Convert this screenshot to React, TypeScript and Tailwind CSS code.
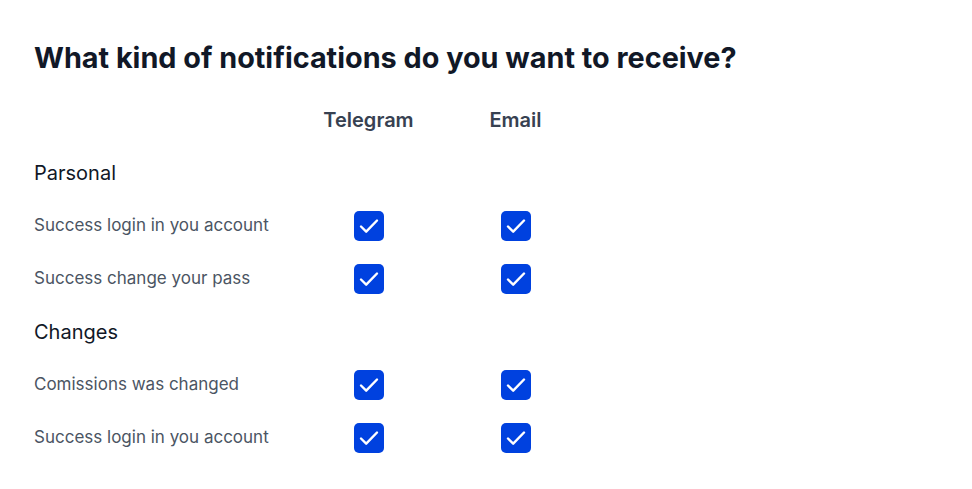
import React, { useState } from "react";

type Row = { id: string; label: string };

const sections: { title: string; rows: Row[] }[] = [
  {
    title: "Parsonal",
    rows: [
      { id: "p-login", label: "Success login in you account" },
      { id: "p-pass", label: "Success change your pass" },
    ],
  },
  {
    title: "Changes",
    rows: [
      { id: "c-comm", label: "Comissions was changed" },
      { id: "c-login", label: "Success login in you account" },
    ],
  },
];

const Check = ({ checked, onToggle }: { checked: boolean; onToggle: () => void }) => (
  <button
    type="button"
    onClick={onToggle}
    className={`w-[30px] h-[30px] rounded-[5px] flex items-center justify-center ${
      checked ? "bg-[#0041df]" : "bg-white border-2 border-gray-300"
    }`}
  >
    {checked && (
      <svg width="26" height="26" viewBox="0 0 26 26" fill="none">
        <path d="M5 13.5l5.2 5.2L21 7.5" stroke="white" strokeWidth="2.4" strokeLinecap="round" strokeLinejoin="round" />
      </svg>
    )}
  </button>
);

const App = () => {
  const [state, setState] = useState<Record<string, boolean>>({});

  const isOn = (key: string) => state[key] !== false;
  const toggle = (key: string) => setState((prev) => ({ ...prev, [key]: !isOn(key) }));

  return (
    <div className="min-h-screen bg-white px-[34px] pt-[40px] font-['Inter',sans-serif]">
      <h1 className="text-[28.8px] leading-[36px] font-bold text-[#111827] mb-[17px]">
        What kind of notifications do you want to receive?
      </h1>

      <div className="grid grid-cols-[261px_147px_147px] auto-rows-[53px] items-center">
        <div />
        <div className="text-center text-xl font-semibold text-[#374151]">Telegram</div>
        <div className="text-center text-xl font-semibold text-[#374151]">Email</div>

        {sections.map((section) => (
          <React.Fragment key={section.title}>
            <div className="col-span-3 text-xl text-[#111827]">{section.title}</div>
            {section.rows.map((row) => (
              <React.Fragment key={row.id}>
                <div className="text-[17px] text-[#4b5563]">{row.label}</div>
                <div className="flex justify-center">
                  <Check checked={isOn(row.id + "-tg")} onToggle={() => toggle(row.id + "-tg")} />
                </div>
                <div className="flex justify-center">
                  <Check checked={isOn(row.id + "-mail")} onToggle={() => toggle(row.id + "-mail")} />
                </div>
              </React.Fragment>
            ))}
          </React.Fragment>
        ))}
      </div>
    </div>
  );
};

export default App;
